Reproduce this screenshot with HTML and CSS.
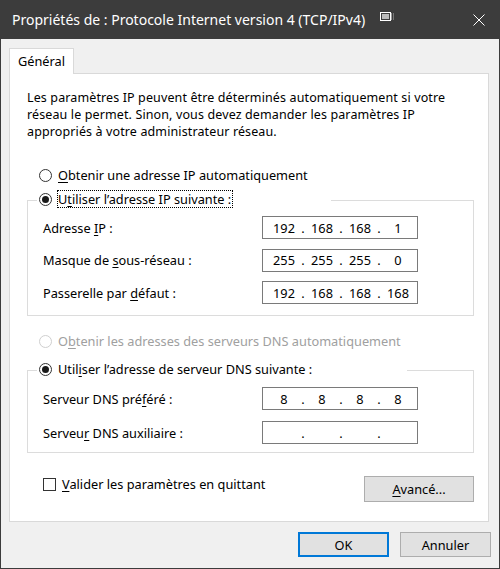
FILE: index.html
```html
<!DOCTYPE html>
<html lang="fr">
<head>
    <meta charset="UTF-8">
    <title>Propriétés de : Protocole Internet version 4 (TCP/IPv4)</title>
    <link rel="stylesheet" href="styles.css">
</head>
<body>
    <div class="window">
        <div class="titlebar">
            <span class="title">Propriétés de : Protocole Internet version 4 (TCP/IPv4)</span>
            <svg class="title-icon" width="15" height="10" viewBox="0 0 15 10">
                <rect x="0.5" y="0.5" width="10" height="8" fill="none" stroke="#fff"/>
                <rect x="2" y="2" width="7" height="5" fill="#bbb"/>
                <rect x="11" y="1" width="1" height="7" fill="#999"/>
                <rect x="13" y="1" width="1" height="7" fill="#777"/>
            </svg>
            <svg class="close" width="12" height="12" viewBox="0 0 12 12">
                <path d="M0.5 0.5 L11.5 11.5 M11.5 0.5 L0.5 11.5" stroke="#fff" stroke-width="1"/>
            </svg>
        </div>

        <div class="client">
            <div class="tabs">
                <div class="tab">Général</div>
            </div>

            <div class="panel">
                <p class="intro">Les paramètres IP peuvent être déterminés automatiquement si votre<br>réseau le permet. Sinon, vous devez demander les paramètres IP<br>appropriés à votre administrateur réseau.</p>

                <div class="radio first-radio">
                    <span class="circle"></span>
                    <span><u>O</u>btenir une adresse IP automatiquement</span>
                </div>

                <fieldset class="group ip-group">
                    <legend class="ip-legend">
                        <span class="radio">
                            <span class="circle checked"></span>
                            <span class="focus">U<u>t</u>iliser l’adresse IP suivante :</span>
                        </span>
                    </legend>
                    <div class="field">
                        <span>Adresse <u>I</u>P :</span>
                        <div class="ipbox"><span>192</span><i>.</i><span>168</span><i>.</i><span>168</span><i>.</i><span>1</span></div>
                    </div>
                    <div class="field">
                        <span>Masque de <u>s</u>ous-réseau :</span>
                        <div class="ipbox"><span>255</span><i>.</i><span>255</span><i>.</i><span>255</span><i>.</i><span>0</span></div>
                    </div>
                    <div class="field">
                        <span>Passerelle par <u>d</u>éfaut :</span>
                        <div class="ipbox"><span>192</span><i>.</i><span>168</span><i>.</i><span>168</span><i>.</i><span>168</span></div>
                    </div>
                </fieldset>

                <div class="radio disabled dns-auto">
                    <span class="circle"></span>
                    <span>O<u>b</u>tenir les adresses des serveurs DNS automatiquement</span>
                </div>

                <fieldset class="group dns-group">
                    <legend class="dns-legend">
                        <span class="radio">
                            <span class="circle checked"></span>
                            <span>Util<u>i</u>ser l’adresse de serveur DNS suivante :</span>
                        </span>
                    </legend>
                    <div class="field">
                        <span>Serveur DNS pré<u>f</u>éré :</span>
                        <div class="ipbox"><span>8</span><i>.</i><span>8</span><i>.</i><span>8</span><i>.</i><span>8</span></div>
                    </div>
                    <div class="field">
                        <span>Serveu<u>r</u> DNS auxiliaire :</span>
                        <div class="ipbox"><span></span><i>.</i><span></span><i>.</i><span></span><i>.</i><span></span></div>
                    </div>
                </fieldset>

                <div class="options">
                    <div class="checkbox">
                        <span class="box"></span>
                        <span><u>V</u>alider les paramètres en quittant</span>
                    </div>
                    <button class="btn advanced"><u>A</u>vancé...</button>
                </div>
            </div>

            <div class="footer">
                <button class="btn default">OK</button>
                <button class="btn">Annuler</button>
            </div>
        </div>
    </div>
</body>
</html>
```

FILE: styles.css
```css
body {
    margin: 0;
    font-family: "Noto Sans", "Open Sans", sans-serif;
    font-size: 12.75px;
    color: #000;
}
u {
    text-decoration: underline;
    text-underline-offset: 2px;
}
.window {
    width: 500px;
    height: 569px;
    box-sizing: border-box;
    background: #3c3c3c;
    padding: 0 1px 1px 1px;
    display: flex;
    flex-direction: column;
}
.titlebar {
    height: 39px;
    display: flex;
    align-items: center;
    color: #fff;
    font-size: 14px;
    padding-left: 11px;
}
.title-icon {
    margin-left: 15px;
    margin-top: -6px;
}
.close {
    margin-left: auto;
    margin-right: 14px;
}
.client {
    flex: 1;
    background: #f0f0f0;
    display: flex;
    flex-direction: column;
}
.tabs {
    display: flex;
    padding: 9px 0 0 8px;
}
.tab {
    position: relative;
    z-index: 1;
    width: 65px;
    height: 26px;
    box-sizing: border-box;
    margin-bottom: -1px;
    padding: 3px 0 0 8px;
    background: #fff;
    border: 1px solid #d9d9d9;
    border-bottom: none;
}
.panel {
    height: 449px;
    box-sizing: border-box;
    margin: 0 10px 0 8px;
    padding: 15px 14px 0 17px;
    background: #fff;
    border: 1px solid #d9d9d9;
}
.intro {
    margin: 0;
    font-size: 12.5px;
    letter-spacing: 0.12px;
    line-height: 17px;
}
.radio {
    display: flex;
    align-items: center;
    height: 16px;
    line-height: 16px;
}
.first-radio {
    margin: 27px 0 0 12px;
}
.circle {
    width: 13px;
    height: 13px;
    box-sizing: border-box;
    border: 1px solid #333;
    border-radius: 50%;
    background: #fff;
    margin-right: 6px;
    display: flex;
    align-items: center;
    justify-content: center;
}
.circle.checked::after {
    content: "";
    width: 7px;
    height: 7px;
    border-radius: 50%;
    background: #1a1a1a;
}
.disabled {
    color: #a0a0a0;
}
.disabled .circle {
    border-color: #cfcfcf;
}
.focus {
    outline: 1px dotted #000;
    outline-offset: 0;
    padding: 0 1px 0 0;
}
.group {
    margin: 0;
    border: 1px solid #dcdcdc;
    padding: 0 55px 0 15px;
}
.group legend {
    margin-left: -6px;
    padding: 0 0 2px 2px;
    box-sizing: border-box;
}
.ip-group {
    margin-top: 8px;
    padding-bottom: 11px;
}
.ip-legend {
    width: 294px;
}
.dns-legend {
    width: 370px;
}
.field {
    display: flex;
    align-items: center;
    justify-content: space-between;
    height: 23px;
}
.ip-group .field {
    margin-top: 9.5px;
}
.ip-group .field:first-of-type {
    margin-top: 7px;
}
.dns-auto {
    margin: 17px 0 0 12px;
}
.dns-group {
    margin-top: 12px;
    padding-bottom: 8px;
}
.dns-group .field {
    margin-top: 11px;
}
.dns-group .field:first-of-type {
    margin-top: 8px;
}
.ipbox {
    width: 156px;
    height: 23px;
    box-sizing: border-box;
    border: 1px solid #7a7a7a;
    background: #fff;
    display: flex;
    align-items: center;
    padding-left: 6px;
}
.ipbox span {
    width: 30px;
    text-align: center;
}
.ipbox i {
    font-style: normal;
    width: 8px;
    text-align: center;
}
.options {
    display: flex;
    align-items: flex-start;
    justify-content: space-between;
    margin-top: 23px;
}
.checkbox {
    display: flex;
    align-items: center;
    height: 16px;
    margin: 0 0 0 16px;
}
.box {
    width: 13px;
    height: 13px;
    box-sizing: border-box;
    border: 1px solid #333;
    background: #fff;
    margin-right: 6px;
}
.btn {
    font-family: inherit;
    font-size: 12.75px;
    color: #000;
    background: #e1e1e1;
    border: 1px solid #adadad;
    padding: 0;
    height: 25px;
    width: 91px;
}
.advanced {
    width: 110px;
    height: 26px;
}
.default {
    border: 2px solid #0078d7;
}
.footer {
    display: flex;
    justify-content: flex-end;
    gap: 11px;
    padding: 10px 8px 0 0;
}
```
